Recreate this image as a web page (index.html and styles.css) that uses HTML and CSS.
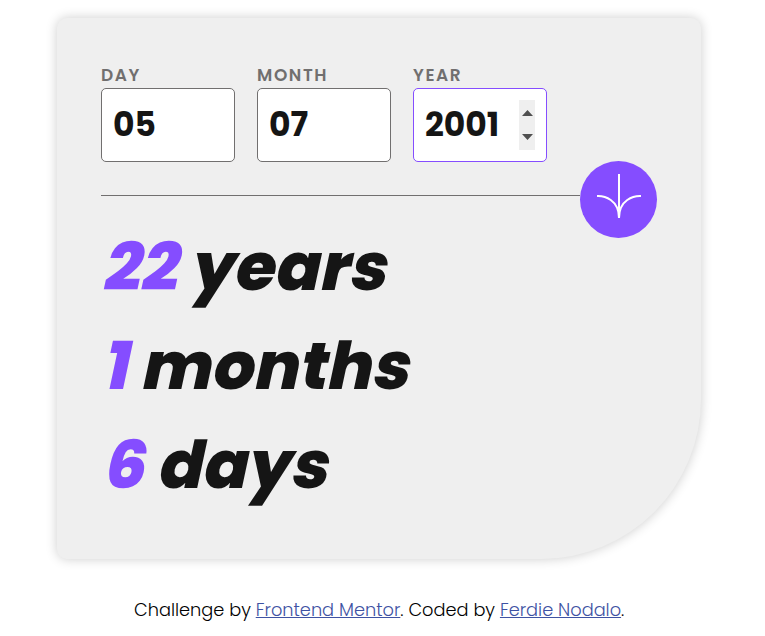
FILE: index.html
```html
<!DOCTYPE html>
<html lang="en">
<head>
<meta charset="utf-8">
<title>Age calculator app</title>
<link rel="stylesheet" href="styles.css">
</head>
<body>
<main class="card">
  <form class="fields">
    <label class="field"><span class="label">DAY</span><span class="box"><input class="value" type="text" value="05"></span></label>
    <label class="field"><span class="label">MONTH</span><span class="box"><input class="value" type="text" value="07"></span></label>
    <label class="field"><span class="label">YEAR</span><span class="box box-active"><input class="value value-year" type="text" value="2001">
      <svg class="spinner" width="16" height="50" viewBox="0 0 16 50"><path fill="#505050" d="M3 16L8.5 10L14 16ZM3 34L8.5 40L14 34Z"/></svg></span></label>
  </form>
  <div class="divider">
    <span class="rule"></span>
    <button class="submit" type="button" aria-label="Calculate"><svg width="46" height="44" viewBox="0 0 46 44"><path fill="none" stroke="#fff" stroke-width="2" d="M1 22.019C8.333 21.686 23 25.616 23 44M23 44V0M45 22.019C37.667 21.686 23 25.616 23 44"/></svg></button>
  </div>
  <section class="results">
    <p class="result"><span class="num">22</span> years</p>
    <p class="result"><span class="num">1</span> months</p>
    <p class="result"><span class="num">6</span> days</p>
  </section>
</main>
<footer class="footer">Challenge by <a href="#">Frontend Mentor</a>. Coded by <a href="#">Ferdie Nodalo</a>.</footer>
</body>
</html>
```
FILE: styles.css
```css
* { box-sizing: border-box; }
body {
  margin: 0;
  height: 636px;
  overflow: hidden;
  background: #fff;
  font-family: Poppins, Inter, sans-serif;
}
.card {
  width: 644px;
  height: 541px;
  margin: 18px 0 0 57px;
  padding: 47px 44px 0;
  background: #efefef;
  border-radius: 10px 10px 160px 10px;
  box-shadow: 0 0 12px rgba(0, 0, 0, .2);
}
.fields { display: flex; gap: 22px; }
.field { display: flex; flex-direction: column; width: 134px; }
.label {
  height: 23px;
  line-height: 21px;
  font-size: 17px;
  font-weight: 600;
  letter-spacing: 1.6px;
  color: #716f6f;
}
.box {
  display: flex;
  align-items: center;
  height: 74px;
  padding: 0 11px;
  background: #fff;
  border: 1px solid #716f6f;
  border-radius: 5px;
}
.box-active { border-color: #854dff; }
.value {
  width: 100%;
  min-width: 0;
  height: 50px;
  padding: 0;
  border: 0;
  outline: 0;
  background: none;
  font: 700 33px Poppins, Inter, sans-serif;
  color: #151515;
}
.value-year { width: 94px; }
.spinner { flex: none; background: #efefef; }
.divider { display: flex; align-items: center; height: 77px; margin-top: -1px; }
.rule { flex: 1; height: 1px; margin-top: -8px; background: #716f6f; }
.submit {
  display: grid;
  place-items: center;
  width: 77px;
  height: 77px;
  padding: 0 0 7px 1px;
  border: 0;
  border-radius: 50%;
  background: #854dff;
}
.results { margin-top: -20px; }
.result {
  height: 99px;
  margin: 0;
  line-height: 99px;
  font-size: 66px;
  font-weight: 800;
  color: #151515;
  white-space: nowrap;
  transform: skewX(-12deg);
  transform-origin: 0 74px;
}
.num { color: #854dff; }
.footer {
  margin: 39px 0 0 134px;
  line-height: 24px;
  font-size: 17.75px;
  font-weight: 300;
  color: #000;
  white-space: nowrap;
}
.footer a { color: #3e52a3; text-underline-offset: 1px; text-decoration-thickness: 1px; }
```
